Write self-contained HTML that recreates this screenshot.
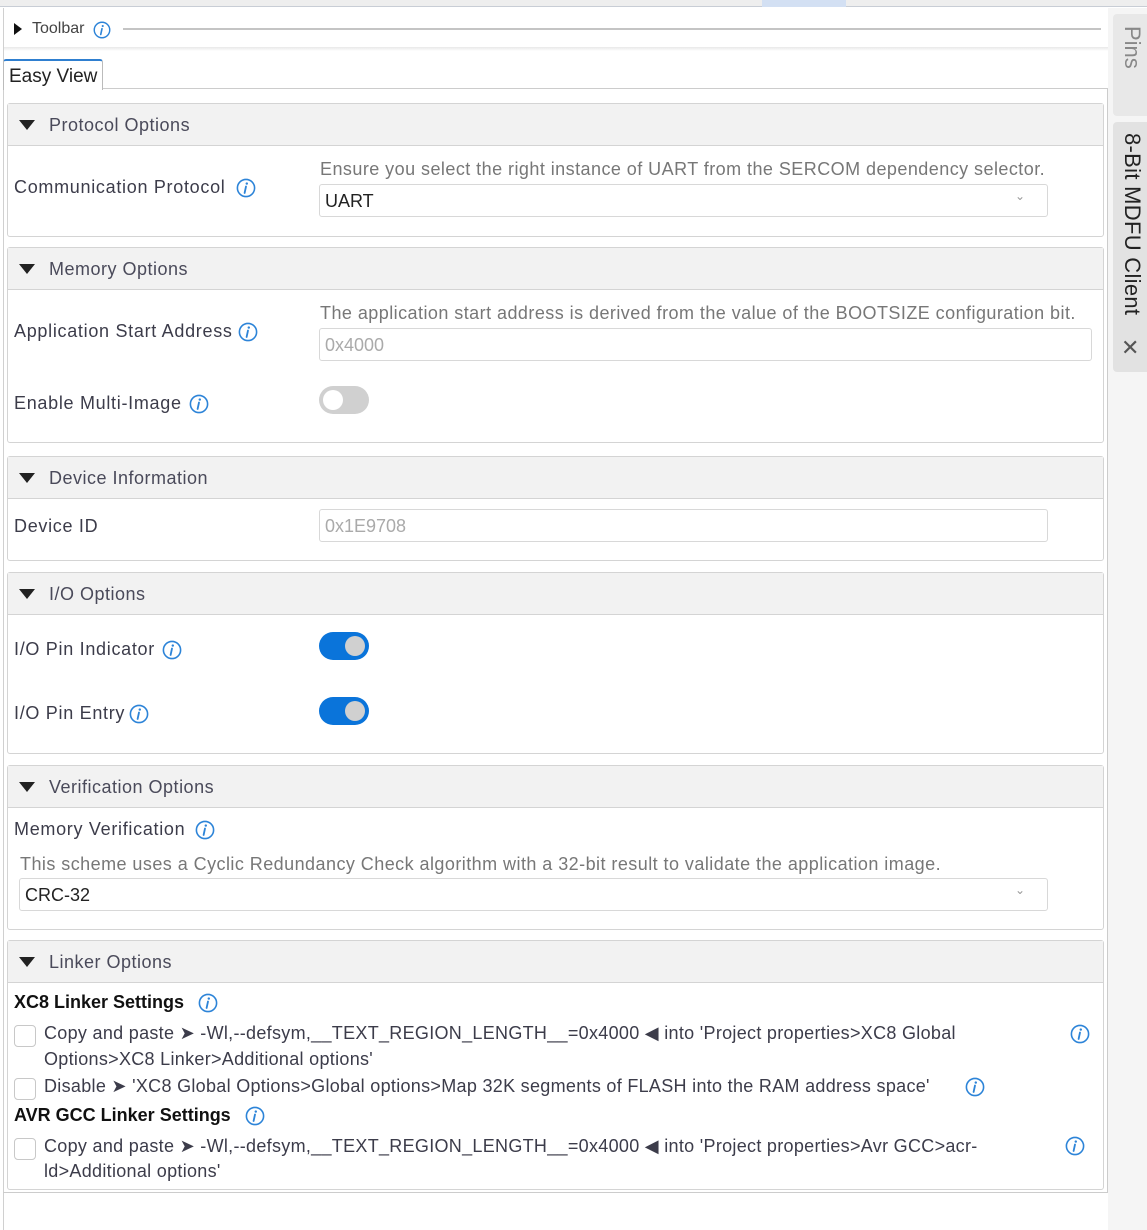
<!DOCTYPE html>
<html><head><meta charset="utf-8"><style>
*{box-sizing:border-box;margin:0;padding:0}
body{width:1147px;height:1230px;background:#fff;font-family:"Liberation Sans",sans-serif;color:#3c3c4a;position:relative;overflow:hidden;font-size:18px}
.a{position:absolute;white-space:nowrap}
.l{letter-spacing:0.7px}
.sec{position:absolute;left:7px;width:1097px;border:1px solid #d4d4d4;border-radius:3px;background:#fff}
.hd{position:absolute;left:0;right:0;top:0;height:42px;background:#f2f2f2;border-bottom:1px solid #d4d4d4}
.hd span{position:absolute;left:41px;top:11px;color:#4a4a5a;letter-spacing:0.5px}
.hd i{position:absolute;left:11px;top:16px;width:0;height:0;border-left:8px solid transparent;border-right:8px solid transparent;border-top:10px solid #222}
.inp{position:absolute;border:1px solid #d8d8d8;border-radius:3px;height:33px;padding:6px 5px;background:#fff}
.hint{color:#777;letter-spacing:0.45px}
.tog{position:absolute;width:50px;height:28px;border-radius:14px}
.tog b{position:absolute;top:4px;width:20px;height:20px;border-radius:50%;}
.cb{position:absolute;width:22px;height:22px;border:1px solid #c8c8c8;border-radius:4px;background:#fff}
.ic{position:absolute;width:20px;height:20px}
.k{letter-spacing:0.3px}
</style></head><body>
<svg width="0" height="0" style="position:absolute"><defs><symbol id="i" viewBox="0 0 20 20"><circle cx="10" cy="10" r="8.6" fill="none" stroke="#2d84d8" stroke-width="1.6"/><circle cx="10.8" cy="5.6" r="1.2" fill="#2d84d8"/><path d="M10 8.5 L8.6 15" stroke="#2d84d8" stroke-width="1.8" stroke-linecap="round"/></symbol></defs></svg>

<div class="a" style="left:0;top:0;width:1147px;height:7px;background:#eeeeee;border-bottom:1px solid #c8cdd5"></div>
<div class="a" style="left:762px;top:0;width:84px;height:7px;background:#d3e0f3"></div>
<div class="a" style="left:3px;top:8px;width:1px;height:1222px;background:#d0d0d0"></div>

<div class="a" style="left:14px;top:23px;width:0;height:0;border-top:6px solid transparent;border-bottom:6px solid transparent;border-left:8px solid #111"></div>
<div class="a" style="left:32px;top:20px;font-size:16px;color:#444">Toolbar</div>
<svg class="ic" style="left:93px;top:21px;width:18px;height:18px"><use href="#i"/></svg>
<div class="a" style="left:123px;top:28px;width:978px;height:2px;background:#c4c4c4"></div>
<div class="a" style="left:4px;top:47px;width:1104px;height:4px;background:linear-gradient(#e8e8e8,#fff)"></div>

<div class="a" style="left:3px;top:59px;width:100px;height:31px;border:1px solid #bbb;border-top:2px solid #2f7fd0;border-bottom:none;border-radius:3px 3px 0 0;background:#fff"></div>
<div class="a" style="left:9px;top:66px;font-size:19px;color:#222">Easy View</div>
<div class="a" style="left:103px;top:88px;width:1005px;height:1px;background:#ccc"></div>
<div class="a" style="left:1107px;top:88px;width:1px;height:1105px;background:#ccc"></div>
<div class="a" style="left:3px;top:1192px;width:1105px;height:1px;background:#ccc"></div>
<div class="a" style="left:1108px;top:8px;width:39px;height:1222px;background:#f5f5f5"></div>

<div class="a" style="left:1113px;top:14px;width:34px;height:102px;background:#e8e8e8;border-radius:4px 0 0 4px"></div>
<div class="a" style="left:1119px;top:26px;transform-origin:0 0;transform:rotate(90deg) translateY(-26px);font-size:22px;color:#888">Pins</div>
<div class="a" style="left:1113px;top:122px;width:34px;height:250px;background:#e2e2e2;border-radius:4px 0 0 4px"></div>
<div class="a" style="left:1119px;top:133px;transform-origin:0 0;transform:rotate(90deg) translateY(-26px);font-size:22px;color:#222;letter-spacing:0.3px">8-Bit MDFU Client</div>
<div class="a" style="left:1121px;top:335px;font-size:22px;color:#555">✕</div>

<div class="sec" style="top:103px;height:134px"><div class="hd"><i></i><span>Protocol Options</span></div></div>
<div class="a l" style="left:14px;top:177px">Communication Protocol</div>
<svg class="ic" style="left:236px;top:178px"><use href="#i"/></svg>
<div class="a hint" style="left:320px;top:159px">Ensure you select the right instance of UART from the SERCOM dependency selector.</div>
<div class="inp" style="left:319px;top:184px;width:729px;color:#222">UART<span style="position:absolute;right:22px;top:4px;color:#999;font-size:12px">⌄</span></div>

<div class="sec" style="top:247px;height:196px"><div class="hd"><i></i><span>Memory Options</span></div></div>
<div class="a l" style="left:14px;top:321px">Application Start Address</div>
<svg class="ic" style="left:238px;top:322px"><use href="#i"/></svg>
<div class="a hint" style="left:320px;top:303px">The application start address is derived from the value of the BOOTSIZE configuration bit.</div>
<div class="inp" style="left:319px;top:328px;width:773px;color:#aaa">0x4000</div>
<div class="a l" style="left:14px;top:393px">Enable Multi-Image</div>
<svg class="ic" style="left:189px;top:394px"><use href="#i"/></svg>
<div class="tog" style="left:319px;top:386px;background:#d0d0d0"><b style="left:4px;background:#fff"></b></div>

<div class="sec" style="top:456px;height:105px"><div class="hd"><i></i><span>Device Information</span></div></div>
<div class="a l" style="left:14px;top:516px">Device ID</div>
<div class="inp" style="left:319px;top:509px;width:729px;color:#aaa">0x1E9708</div>

<div class="sec" style="top:572px;height:182px"><div class="hd"><i></i><span>I/O Options</span></div></div>
<div class="a l" style="left:14px;top:639px">I/O Pin Indicator</div>
<svg class="ic" style="left:162px;top:640px"><use href="#i"/></svg>
<div class="tog" style="left:319px;top:632px;background:#0a74da"><b style="left:26px;background:#d0d0d0"></b></div>
<div class="a l" style="left:14px;top:703px">I/O Pin Entry</div>
<svg class="ic" style="left:129px;top:704px"><use href="#i"/></svg>
<div class="tog" style="left:319px;top:697px;background:#0a74da"><b style="left:26px;background:#d0d0d0"></b></div>

<div class="sec" style="top:765px;height:165px"><div class="hd"><i></i><span>Verification Options</span></div></div>
<div class="a l" style="left:14px;top:819px">Memory Verification</div>
<svg class="ic" style="left:195px;top:820px"><use href="#i"/></svg>
<div class="a hint" style="left:20px;top:854px">This scheme uses a Cyclic Redundancy Check algorithm with a 32-bit result to validate the application image.</div>
<div class="inp" style="left:19px;top:878px;width:1029px;color:#222">CRC-32<span style="position:absolute;right:22px;top:4px;color:#999;font-size:12px">⌄</span></div>

<div class="sec" style="top:940px;height:250px"><div class="hd"><i></i><span>Linker Options</span></div></div>
<div class="a" style="left:14px;top:992px;font-weight:bold;color:#111">XC8 Linker Settings</div>
<svg class="ic" style="left:198px;top:993px"><use href="#i"/></svg>
<div class="cb" style="left:14px;top:1025px"></div>
<div class="a k" style="left:44px;top:1023px">Copy and paste ➤ -Wl,--defsym,__TEXT_REGION_LENGTH__=0x4000 ◀ into 'Project properties&gt;XC8 Global</div>
<div class="a k" style="left:44px;top:1049px">Options&gt;XC8 Linker&gt;Additional options'</div>
<svg class="ic" style="left:1070px;top:1024px"><use href="#i"/></svg>
<div class="cb" style="left:14px;top:1078px"></div>
<div class="a k" style="left:44px;top:1076px">Disable ➤ 'XC8 Global Options&gt;Global options&gt;Map 32K segments of FLASH into the RAM address space'</div>
<svg class="ic" style="left:965px;top:1077px"><use href="#i"/></svg>
<div class="a" style="left:14px;top:1105px;font-weight:bold;color:#111">AVR GCC Linker Settings</div>
<svg class="ic" style="left:245px;top:1106px"><use href="#i"/></svg>
<div class="cb" style="left:14px;top:1138px"></div>
<div class="a k" style="left:44px;top:1136px">Copy and paste ➤ -Wl,--defsym,__TEXT_REGION_LENGTH__=0x4000 ◀ into 'Project properties&gt;Avr GCC&gt;acr-</div>
<div class="a k" style="left:44px;top:1161px">ld&gt;Additional options'</div>
<svg class="ic" style="left:1065px;top:1136px"><use href="#i"/></svg>
</body></html>
